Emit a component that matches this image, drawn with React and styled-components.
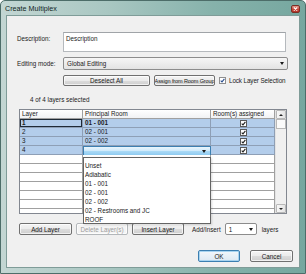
import React from 'react';
import styled, { createGlobalStyle } from 'styled-components';

const GlobalStyle = createGlobalStyle`
  html, body {
    margin: 0;
    padding: 0;
    background: #ffffff;
  }
  body {
    font-family: "Liberation Sans", Arial, sans-serif;
    font-size: 6.3px;
    color: #1a1a1a;
  }
`;

const Window = styled.div`
  width: 306px;
  height: 274px;
  box-sizing: border-box;
  display: flex;
  flex-direction: column;
  border: 1px solid #4d6d69;
  border-radius: 5px 5px 0 0;
  padding: 0 5px 5px 5px;
  background: linear-gradient(to right, #c3d6d3 0%, #a9c7c2 35%, #86b2ab 70%, #76a79f 100%);
`;

const TitleBar = styled.div`
  height: 14px;
  display: flex;
  align-items: center;
  justify-content: space-between;
`;

const Title = styled.span`
  font-size: 7.2px;
  color: #0f1f1d;
  margin-left: -1px;
`;

const CloseButton = styled.div`
  width: 9px;
  height: 8px;
  margin-top: 1px;
  border-radius: 2px;
  border: 1px solid #7a2e25;
  box-sizing: border-box;
  background: linear-gradient(#e39a8c, #c8473a 55%, #b3352a);
  display: flex;
  align-items: center;
  justify-content: center;
`;

const Client = styled.div`
  flex: 1;
  background: #f0f0f0;
  border: 1px solid #7f9c98;
  padding: 16px 12px 0 10px;
  display: flex;
  flex-direction: column;
`;

const FieldRow = styled.div`
  display: flex;
  align-items: flex-start;
  margin-top: ${(p) => p.$gap || 0}px;
`;

const Label = styled.div`
  width: 46px;
  flex-shrink: 0;
  padding-top: ${(p) => p.$top || 0}px;
  line-height: 9px;
`;

const TextBox = styled.div`
  width: 223px;
  height: 20px;
  box-sizing: border-box;
  border: 1px solid #b5b9bd;
  border-top-color: #a0a4a8;
  background: #ffffff;
  padding: 1px 2px;
  line-height: 9px;
`;

const Select = styled.div`
  width: ${(p) => p.$width}px;
  height: ${(p) => p.$height}px;
  flex-shrink: 0;
  box-sizing: border-box;
  border: 1px solid #8c8c8c;
  border-radius: 2px;
  background: ${(p) => (p.$flat ? '#ffffff' : 'linear-gradient(#f6f6f6, #e3e3e3)')};
  display: flex;
  align-items: center;
  justify-content: space-between;
  padding: 0 3px 0 3px;
  line-height: 9px;
`;

const Arrow = styled.span`
  width: 0;
  height: 0;
  border-left: 2.5px solid transparent;
  border-right: 2.5px solid transparent;
  border-top: 3px solid #1a1a1a;
`;

const ButtonRow = styled.div`
  display: flex;
  align-items: center;
  gap: ${(p) => p.$gap || 5}px;
  margin-top: ${(p) => p.$top || 0}px;
  margin-left: ${(p) => p.$left || 0}px;
  justify-content: ${(p) => (p.$end ? 'flex-end' : 'flex-start')};
  margin-right: ${(p) => p.$right || 0}px;
  white-space: nowrap;
`;

const Button = styled.div`
  width: ${(p) => p.$width}px;
  height: ${(p) => p.$height || 12}px;
  flex-shrink: 0;
  box-sizing: border-box;
  border: 1px solid ${(p) => (p.$focus ? '#3c7fb1' : p.disabled ? '#b3b7ba' : '#707070')};
  border-radius: 2px;
  background: ${(p) =>
    p.disabled
      ? '#f4f4f4'
      : p.$focus
      ? 'linear-gradient(#f2f7fb, #dde9f3)'
      : 'linear-gradient(#f4f4f4 0%, #ebebeb 50%, #dcdcdc 51%, #cfcfcf 100%)'};
  color: ${(p) => (p.disabled ? '#9c9c9c' : '#1a1a1a')};
  font-size: ${(p) => p.$size || 6.3}px;
  letter-spacing: ${(p) => p.$tight || 0}px;
  display: flex;
  align-items: center;
  justify-content: center;
  white-space: nowrap;
  overflow: hidden;
  box-shadow: ${(p) => (p.$focus ? 'inset 0 0 0 1px #a8d4f0' : 'inset 0 0 0 1px rgba(255,255,255,0.7)')};
`;

const CheckWrap = styled.div`
  display: flex;
  align-items: center;
  gap: 3px;
  flex-shrink: 0;
  white-space: nowrap;
  letter-spacing: -0.1px;
`;

const Status = styled.div`
  margin-top: 9px;
  margin-left: 13px;
  line-height: 9px;
  height: 9px;
`;

const Grid = styled.div`
  position: relative;
  margin-top: 5px;
  margin-left: 2px;
  width: 268px;
  height: 105px;
  box-sizing: border-box;
  border: 1px solid #828790;
  background: #ffffff;
  display: flex;
`;

const GridBody = styled.div`
  width: 255px;
  overflow: hidden;
`;

const Row = styled.div`
  display: grid;
  grid-template-columns: 63px 128px 64px;
  height: 9px;
`;

const Cell = styled.div`
  box-sizing: border-box;
  height: 9px;
  border-right: 1px solid ${(p) => (p.$sel ? '#8e9fb6' : '#a0a0a0')};
  border-bottom: 1px solid ${(p) => (p.$sel ? '#8e9fb6' : '#a0a0a0')};
  background: ${(p) => (p.$head ? 'linear-gradient(#ffffff, #f1f2f4)' : p.$sel ? '#b3cdeb' : '#ffffff')};
  padding-left: 2px;
  line-height: 8px;
  font-weight: ${(p) => (p.$bold ? 700 : 400)};
  display: flex;
  align-items: center;
  justify-content: ${(p) => (p.$center ? 'center' : 'flex-start')};
  white-space: nowrap;
  overflow: hidden;
  box-shadow: ${(p) => (p.$focus ? 'inset 0 0 0 1px #1f2a36' : 'none')};
`;

const ComboCell = styled.div`
  box-sizing: border-box;
  height: 10px;
  border: 1px solid #3c7fb1;
  background: linear-gradient(#eaf6fd 0%, #d1ebfb 45%, #a9d9f6 55%, #8fcbf1 100%);
  display: flex;
  align-items: center;
  justify-content: flex-end;
  padding-right: 4px;
`;

const ScrollBar = styled.div`
  width: 11px;
  display: flex;
  flex-direction: column;
  background: #f0f0f0;
  border-left: 1px solid #e3e3e3;
  box-sizing: border-box;
`;

const ScrollButton = styled.div`
  height: 9px;
  box-sizing: border-box;
  border: 1px solid #b8b8b8;
  border-radius: 1px;
  background: linear-gradient(to right, #f7f7f7, #e4e4e4);
  display: flex;
  align-items: center;
  justify-content: center;
`;

const Thumb = styled.div`
  height: 10px;
  box-sizing: border-box;
  border: 1px solid #b8b8b8;
  background: #fbfbfb;
`;

const Track = styled.div`
  flex: 1;
`;

const Tri = styled.span`
  width: 0;
  height: 0;
  border-left: 2px solid transparent;
  border-right: 2px solid transparent;
  ${(p) => (p.$up ? 'border-bottom: 2.5px solid #222;' : 'border-top: 2.5px solid #222;')}
`;

const DropList = styled.div`
  position: absolute;
  left: 63px;
  top: 47px;
  width: 128px;
  height: 67px;
  box-sizing: border-box;
  border: 1px solid #646464;
  background: #ffffff;
  padding: 3px 0 0 1px;
  box-shadow: 1px 1px 2px rgba(0, 0, 0, 0.15);
`;

const DropItem = styled.div`
  height: 9px;
  line-height: 9px;
  white-space: nowrap;
`;

const Inline = styled.span`
  margin: 0 ${(p) => p.$mr || 0}px 0 ${(p) => p.$ml || 0}px;
`;

const CheckBox = ({ size = 7, color = '#222', border = '#5a5a5a' }) => (
  <svg width={size} height={size} viewBox="0 0 7 7">
    <rect x="0.5" y="0.5" width="6" height="6" fill="#fff" stroke={border} strokeWidth="1" />
    <path d="M1.7 3.6 L3 4.9 L5.4 1.9" fill="none" stroke={color} strokeWidth="1.1" />
  </svg>
);

const rows = [
  { layer: '1', room: '01 - 001', focus: true },
  { layer: '2', room: '02 - 001' },
  { layer: '3', room: '02 - 002' },
];

const options = ['Unset', 'Adiabatic', '01 - 001', '02 - 001', '02 - 002', '02 - Restrooms and JC', 'ROOF'];

const App = () => (
  <>
    <GlobalStyle />
    <Window>
      <TitleBar>
        <Title>Create Multiplex</Title>
        <CloseButton>
          <svg width="5" height="4" viewBox="0 0 5 4">
            <path d="M0.8 0.5 L4.2 3.5 M4.2 0.5 L0.8 3.5" stroke="#fff" strokeWidth="1.1" />
          </svg>
        </CloseButton>
      </TitleBar>
      <Client>
        <FieldRow>
          <Label $top={2}>Description:</Label>
          <TextBox>Description</TextBox>
        </FieldRow>
        <FieldRow $gap={5}>
          <Label $top={2}>Editing mode:</Label>
          <Select $width={225} $height={13}>
            <span>Global Editing</span>
            <Arrow />
          </Select>
        </FieldRow>
        <ButtonRow $top={5} $left={46} $gap={4}>
          <Button $width={87} $height={11}>Deselect All</Button>
          <Button $width={61} $height={11} $size={5.5} $tight={-0.1}>Assign from Room Group</Button>
          <CheckWrap>
            <CheckBox color="#2b4f8f" border="#8f8f8f" />
            <span>Lock Layer Selection</span>
          </CheckWrap>
        </ButtonRow>
        <Status>4 of 4 layers selected</Status>
        <Grid>
          <GridBody>
            <Row>
              <Cell $head>Layer</Cell>
              <Cell $head>Principal Room</Cell>
              <Cell $head>Room(s) assigned</Cell>
            </Row>
            {rows.map((r) => (
              <Row key={r.layer}>
                <Cell $sel $focus={r.focus} $bold={r.focus}>{r.layer}</Cell>
                <Cell $sel $bold={r.focus}>{r.room}</Cell>
                <Cell $sel $center>
                  <CheckBox />
                </Cell>
              </Row>
            ))}
            <Row>
              <Cell $sel>4</Cell>
              <ComboCell>
                <Arrow />
              </ComboCell>
              <Cell $sel $center>
                <CheckBox />
              </Cell>
            </Row>
            {Array.from({ length: 8 }).map((_, i) => (
              <Row key={i}>
                <Cell />
                <Cell />
                <Cell />
              </Row>
            ))}
          </GridBody>
          <ScrollBar>
            <ScrollButton>
              <Tri $up />
            </ScrollButton>
            <Thumb />
            <Track />
            <ScrollButton>
              <Tri />
            </ScrollButton>
          </ScrollBar>
          <DropList>
            {options.map((o) => (
              <DropItem key={o}>{o}</DropItem>
            ))}
          </DropList>
        </Grid>
        <ButtonRow $top={9} $left={2} $gap={4}>
          <Button $width={53}>Add Layer</Button>
          <Button $width={52} disabled>Delete Layer(s)</Button>
          <Button $width={52}>Insert Layer</Button>
          <Inline $ml={4}>Add/Insert</Inline>
          <Select $width={32} $height={12} $flat>
            <span>1</span>
            <Arrow />
          </Select>
          <Inline $ml={1}>layers</Inline>
        </ButtonRow>
        <ButtonRow $top={15} $end $gap={10} $right={-6}>
          <Button $width={42} $focus>OK</Button>
          <Button $width={43}>Cancel</Button>
        </ButtonRow>
      </Client>
    </Window>
  </>
);

export default App;
